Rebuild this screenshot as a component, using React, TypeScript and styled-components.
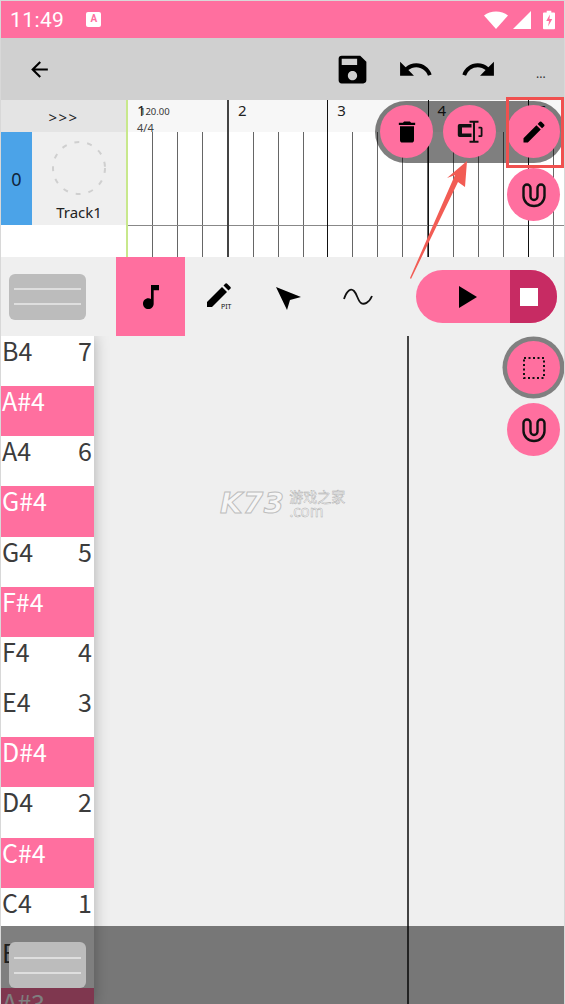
import React from 'react';
import styled, { createGlobalStyle } from 'styled-components';
import { MdArrowBack, MdSave, MdUndo, MdRedo, MdDelete, MdEdit, MdMusicNote } from 'react-icons/md';

const PINK = '#ff6f9f';

const GlobalStyle = createGlobalStyle`
  html, body { margin: 0; padding: 0; background: #fff; }
  body { font-family: "Noto Sans", "Liberation Sans", sans-serif; }
`;

const Screen = styled.div`
  position: relative;
  width: 565px;
  height: 1004px;
  box-sizing: border-box;
  border: 1px solid #d8d8d8;
  border-bottom: none;
  display: flex;
  flex-direction: column;
  overflow: hidden;
  background: #efefef;
`;

const StatusBar = styled.div`
  height: 37px;
  flex: none;
  background: ${PINK};
  color: #fff;
  display: flex;
  align-items: center;
  padding: 0 9px;
  font-family: Roboto, sans-serif;
  font-size: 21px;
  letter-spacing: 0.4px;
`;

const NotifyBadge = styled.span`
  margin-left: 22px;
  width: 15px;
  height: 15px;
  border-radius: 2px;
  background: #fff;
  color: ${PINK};
  font-size: 10px;
  font-weight: 700;
  line-height: 14px;
  text-align: center;
  letter-spacing: 0;
`;

const StatusIcons = styled.div`
  margin-left: auto;
  display: flex;
  align-items: center;
  gap: 5px;
`;

const BatteryIcon = styled.svg`
  margin-left: 7px;
`;

const ActionBar = styled.div`
  height: 62px;
  flex: none;
  background: #d0d0d0;
  display: flex;
  align-items: center;
  padding: 0 18px 0 26px;
  color: #000;
`;

const ActionIcon = styled.span<{ $gap?: number }>`
  display: flex;
  margin-left: ${(p) => p.$gap ?? 0}px;
`;

const MoreDots = styled.span`
  margin-left: 39px;
  font-size: 12px;
  margin-top: 8px;
  color: #333;
`;

const TrackArea = styled.div`
  height: 157px;
  flex: none;
  background: #fff;
  display: grid;
  grid-template-columns: 125px 1fr;
`;

const TrackSide = styled.div`
  display: flex;
  flex-direction: column;
`;

const ExpandButton = styled.div`
  height: 32px;
  background: #e4e4e4;
  color: #222;
  font-size: 15px;
  letter-spacing: 1.5px;
  display: flex;
  align-items: center;
  justify-content: center;
  padding-top: 2px;
  box-sizing: border-box;
`;

const TrackRow = styled.div`
  height: 93px;
  display: flex;
  background: #efefef;
`;

const TrackIndex = styled.div`
  width: 31px;
  background: #4ba3e8;
  color: #10233a;
  font-size: 18px;
  display: flex;
  align-items: center;
  justify-content: center;
`;

const TrackInfo = styled.div`
  flex: 1;
  display: flex;
  flex-direction: column;
  align-items: center;
  padding-top: 9px;
  color: #222;
  font-size: 15px;
  line-height: 20px;
`;

const TrackAvatar = styled.svg`
  display: block;
  margin-bottom: 7px;
`;

const Timeline = styled.div`
  display: flex;
  border-left: 2px solid #c8e88c;
  overflow: hidden;
`;

const Bar = styled.div<{ $first?: boolean; $thick?: boolean }>`
  flex: none;
  width: ${(p) => (p.$first ? 99 : 100.3)}px;
  box-sizing: border-box;
  border-left: ${(p) => (p.$first ? 'none' : p.$thick ? '2px solid #444' : '1px solid #111')};
  display: flex;
  flex-direction: column;
`;

const Ruler = styled.div`
  height: 32px;
  flex: none;
  background: #f7f7f7;
  position: relative;
  padding: 0 0 0 9px;
  box-sizing: border-box;
  font-size: 15px;
  line-height: 21px;
  color: #222;
`;

const Tempo = styled.span`
  position: absolute;
  left: 12px;
  top: 5px;
  font-size: 9.5px;
  line-height: 14px;
  color: #333;
`;

const Signature = styled.span`
  position: absolute;
  left: 9px;
  top: 21px;
  font-size: 11px;
  line-height: 14px;
  color: #444;
`;

const BarBody = styled.div`
  flex: 1;
  background:
    linear-gradient(#888, #888) 0 93px / 100% 1px no-repeat,
    repeating-linear-gradient(to right, transparent 0 23.6px, #666 23.6px 24.6px, transparent 24.6px 25px);
`;

const ToolRow = styled.div`
  height: 79px;
  flex: none;
  display: flex;
  align-items: center;
  background: #efefef;
`;

const Handle = styled.div`
  width: 77px;
  height: 46px;
  box-sizing: border-box;
  margin-left: 8px;
  border-radius: 6px;
  background: #bcbcbc;
  display: flex;
  flex-direction: column;
  justify-content: center;
  gap: 13px;
  padding: 0 5px;
`;

const HandleLine = styled.div`
  height: 2px;
  background: #dedede;
`;

const ToolTabs = styled.div`
  display: flex;
  margin-left: 30px;
  align-self: stretch;
`;

const ToolTab = styled.div<{ $active?: boolean }>`
  width: 69px;
  display: flex;
  align-items: center;
  justify-content: center;
  background: ${(p) => (p.$active ? PINK : 'transparent')};
`;

const Transport = styled.div`
  margin-left: 24px;
  width: 141px;
  height: 53px;
  border-radius: 27px;
  overflow: hidden;
  display: flex;
  background: ${PINK};
`;

const PlayPart = styled.div`
  flex: 1;
  display: flex;
  align-items: center;
  justify-content: center;
  padding-left: 10px;
`;

const StopPart = styled.div`
  width: 47px;
  background: #c72b63;
  display: flex;
  align-items: center;
  padding-left: 10px;
  box-sizing: border-box;
`;

const StopSquare = styled.div`
  width: 18px;
  height: 18px;
  background: #fff;
`;

const Roll = styled.div`
  flex: 1;
  display: flex;
  min-height: 0;
  overflow: hidden;
  background: #efefef;
`;

const Keys = styled.div`
  width: 93px;
  flex: none;
  box-shadow: 0 0 14px rgba(0, 0, 0, 0.28);
`;

const Key = styled.div<{ $black?: boolean }>`
  height: 50.17px;
  box-sizing: border-box;
  padding: 0 2px 0 1px;
  display: flex;
  justify-content: space-between;
  font-family: "Noto Sans CJK SC", "Noto Sans", sans-serif;
  font-size: 25px;
  line-height: 28px;
  background: ${(p) => (p.$black ? PINK : '#fff')};
  color: ${(p) => (p.$black ? '#fff' : '#3c3c3c')};
`;

const RollGrid = styled.div`
  width: 315px;
  flex: none;
  border-right: 2px solid #444;
  box-sizing: border-box;
`;

const BottomShade = styled.div`
  position: absolute;
  left: 0;
  right: 0;
  bottom: 0;
  height: 78px;
  background: rgba(0, 0, 0, 0.5);
`;

const FloatingHandle = styled(Handle)`
  position: absolute;
  left: 0;
  top: 941px;
`;

const FabTray = styled.div`
  position: absolute;
  left: 374px;
  top: 100px;
  width: 190px;
  height: 62px;
  border-radius: 31px;
  background: rgba(0, 0, 0, 0.5);
`;

const Fab = styled.div<{ $x: number; $y: number; $ring?: boolean }>`
  position: absolute;
  left: ${(p) => p.$x - 27}px;
  top: ${(p) => p.$y - 27}px;
  width: 53px;
  height: 53px;
  border-radius: 50%;
  background: ${PINK};
  display: flex;
  align-items: center;
  justify-content: center;
  color: #000;
  box-shadow: ${(p) => (p.$ring ? '0 0 0 4.5px #808080' : 'none')};
`;

const RedFrame = styled.div`
  position: absolute;
  left: 505px;
  top: 96px;
  width: 58px;
  height: 71px;
  box-sizing: border-box;
  border: 3px solid #f0504f;
`;

const ArrowOverlay = styled.svg`
  position: absolute;
  left: 400px;
  top: 150px;
`;

const Watermark = styled.div`
  position: absolute;
  left: 219px;
  top: 485px;
  display: flex;
  align-items: center;
  gap: 5px;
  color: #f6f6f6;
  -webkit-text-stroke: 1px #bdbdbd;
`;

const WatermarkLogo = styled.span`
  font-family: "DejaVu Sans", sans-serif;
  font-weight: 700;
  font-style: italic;
  font-size: 29px;
  line-height: 34px;
  letter-spacing: 0.5px;
`;

const WatermarkSide = styled.div`
  display: flex;
  flex-direction: column;
  font-size: 14px;
  line-height: 15px;
  -webkit-text-stroke: 0.4px #a8a8a8;
  font-family: "Noto Sans CJK SC", sans-serif;
`;

const WatermarkDomain = styled.span`
  font-size: 15px;
  line-height: 13px;
`;

const MagnetIcon = () => (
  <svg width="26" height="26" viewBox="0 0 26 26" fill="none" stroke="#111" strokeWidth="2.4">
    <path d="M2.500 6a3.500 3.500 0 0 1 7 0v8.500a3.500 3.500 0 0 0 7 0V6a3.500 3.500 0 0 1 7 0v8a10.500 10 0 0 1-21 0z" strokeLinejoin="round" />
  </svg>
);

const BeamIcon = () => (
  <svg width="28" height="28" viewBox="0 0 28 28" fill="#111">
    <path d="M3.500 6H15.500v3.500H6v6h9.500V19H3.500a1.700 1.700 0 0 1-1.700-1.700V7.700A1.700 1.700 0 0 1 3.500 6z" />
    <path d="M13.500 2.700h9v2h-3.500v18h3.500v2h-9v-2H17v-18h-3.500z" />
    <path d="M22.500 8.700h2.500a1.500 1.500 0 0 1 1.500 1.500v7.300a1.500 1.500 0 0 1-1.500 1.500h-2.500v-1.800h2.200v-6.700h-2.200z" />
  </svg>
);

const SelectIcon = () => (
  <svg width="24" height="24" viewBox="0 0 24 24" fill="none" stroke="#111" strokeWidth="2" strokeDasharray="2 2.500">
    <rect x="2" y="2" width="20" height="20" />
  </svg>
);

const PitchIcon = () => (
  <svg width="30" height="30" viewBox="0 0 30 30">
    <path d="M2 25v-5L17 5l5 5L7 25z" fill="#000" />
    <path d="M18.500 3.500l2-2a1 1 0 0 1 1.400 0l3.600 3.600a1 1 0 0 1 0 1.400l-2 2z" fill="#000" />
    <text x="16" y="27" fontSize="7" fontFamily="Noto Sans, sans-serif" fill="#111">PIT</text>
  </svg>
);

const CursorIcon = () => (
  <svg width="30" height="30" viewBox="0 0 30 30">
    <path d="M2 5l25 10-11 3-3 10z" fill="#000" />
  </svg>
);

const WaveIcon = () => (
  <svg width="30" height="20" viewBox="0 0 30 20" fill="none" stroke="#111" strokeWidth="1.800">
    <path d="M1 12C4 3 8 1 11 4s4 10 7 12 8 0 11-7" />
  </svg>
);

const PlayIcon = () => (
  <svg width="18" height="22" viewBox="0 0 18 22">
    <path d="M0 0l18 11L0 22z" fill="#000" />
  </svg>
);

const keyRows: { name: string; degree?: string; black?: boolean }[] = [
  { name: 'B4', degree: '7' },
  { name: 'A#4', black: true },
  { name: 'A4', degree: '6' },
  { name: 'G#4', black: true },
  { name: 'G4', degree: '5' },
  { name: 'F#4', black: true },
  { name: 'F4', degree: '4' },
  { name: 'E4', degree: '3' },
  { name: 'D#4', black: true },
  { name: 'D4', degree: '2' },
  { name: 'C#4', black: true },
  { name: 'C4', degree: '1' },
  { name: 'B3' },
  { name: 'A#3', black: true },
];

const bars = ['1', '2', '3', '4', '5'];

export default function App() {
  return (
    <Screen>
      <GlobalStyle />
      <StatusBar>
        11:49
        <NotifyBadge>A</NotifyBadge>
        <StatusIcons>
          <svg width="24" height="18" viewBox="0 0 24 18">
            <path d="M0 4.500C6.500-1 17.500-1 24 4.500L12 18z" fill="#fff" />
          </svg>
          <svg width="18" height="18" viewBox="0 0 18 18">
            <path d="M18 0v18H0z" fill="#fff" />
          </svg>
          <BatteryIcon width="12" height="20" viewBox="0 0 13 20">
            <path d="M4 0h5v2h3a1 1 0 0 1 1 1v16a1 1 0 0 1-1 1H1a1 1 0 0 1-1-1V3a1 1 0 0 1 1-1h3z" fill="#fff" />
            <path d="M7.500 4L3.500 11h3L5.500 17l4.500-8H7z" fill={PINK} />
          </BatteryIcon>
        </StatusIcons>
      </StatusBar>

      <ActionBar>
        <MdArrowBack size={25} />
        <ActionIcon $gap={282}><MdSave size={37} /></ActionIcon>
        <ActionIcon $gap={26}><MdUndo size={37} /></ActionIcon>
        <ActionIcon $gap={26}><MdRedo size={37} /></ActionIcon>
        <MoreDots>...</MoreDots>
      </ActionBar>

      <TrackArea>
        <TrackSide>
          <ExpandButton>&gt;&gt;&gt;</ExpandButton>
          <TrackRow>
            <TrackIndex>0</TrackIndex>
            <TrackInfo>
              <TrackAvatar width="54" height="54" viewBox="0 0 54 54" fill="none" stroke="#cfcfcf" strokeWidth="2" strokeDasharray="5 8">
                <circle cx="27" cy="27" r="26" />
              </TrackAvatar>
              Track1
            </TrackInfo>
          </TrackRow>
        </TrackSide>
        <Timeline>
          {bars.map((label, i) => (
            <Bar key={label} $first={i === 0} $thick={i === 1}>
              <Ruler>
                {label}
                {i === 0 && <Tempo>120.00</Tempo>}
                {i === 0 && <Signature>4/4</Signature>}
              </Ruler>
              <BarBody />
            </Bar>
          ))}
        </Timeline>
      </TrackArea>

      <ToolRow>
        <Handle>
          <HandleLine />
          <HandleLine />
        </Handle>
        <ToolTabs>
          <ToolTab $active><MdMusicNote size={32} /></ToolTab>
          <ToolTab><PitchIcon /></ToolTab>
          <ToolTab><CursorIcon /></ToolTab>
          <ToolTab><WaveIcon /></ToolTab>
        </ToolTabs>
        <Transport>
          <PlayPart><PlayIcon /></PlayPart>
          <StopPart><StopSquare /></StopPart>
        </Transport>
      </ToolRow>

      <Roll>
        <Keys>
          {keyRows.map((k) => (
            <Key key={k.name} $black={k.black}>
              <span>{k.name}</span>
              <span>{k.degree}</span>
            </Key>
          ))}
        </Keys>
        <RollGrid />
      </Roll>

      <Watermark>
        <WatermarkLogo>K73</WatermarkLogo>
        <WatermarkSide>
          <span>游戏之家</span>
          <WatermarkDomain>.com</WatermarkDomain>
        </WatermarkSide>
      </Watermark>

      <BottomShade />
      <FloatingHandle>
        <HandleLine />
        <HandleLine />
      </FloatingHandle>

      <FabTray />
      <Fab $x={406} $y={131}><MdDelete size={28} /></Fab>
      <Fab $x={469} $y={131}><BeamIcon /></Fab>
      <Fab $x={533} $y={131}><MdEdit size={28} /></Fab>
      <Fab $x={533} $y={194}><MagnetIcon /></Fab>
      <Fab $x={533} $y={367} $ring><SelectIcon /></Fab>
      <Fab $x={533} $y={429}><MagnetIcon /></Fab>
      <RedFrame />
      <ArrowOverlay width="80" height="135" viewBox="0 0 80 135">
        <path d="M9 127L54 24 46 27 66 10 64 36 57 31 10 128z" fill="#f25c54" />
      </ArrowOverlay>
    </Screen>
  );
}
